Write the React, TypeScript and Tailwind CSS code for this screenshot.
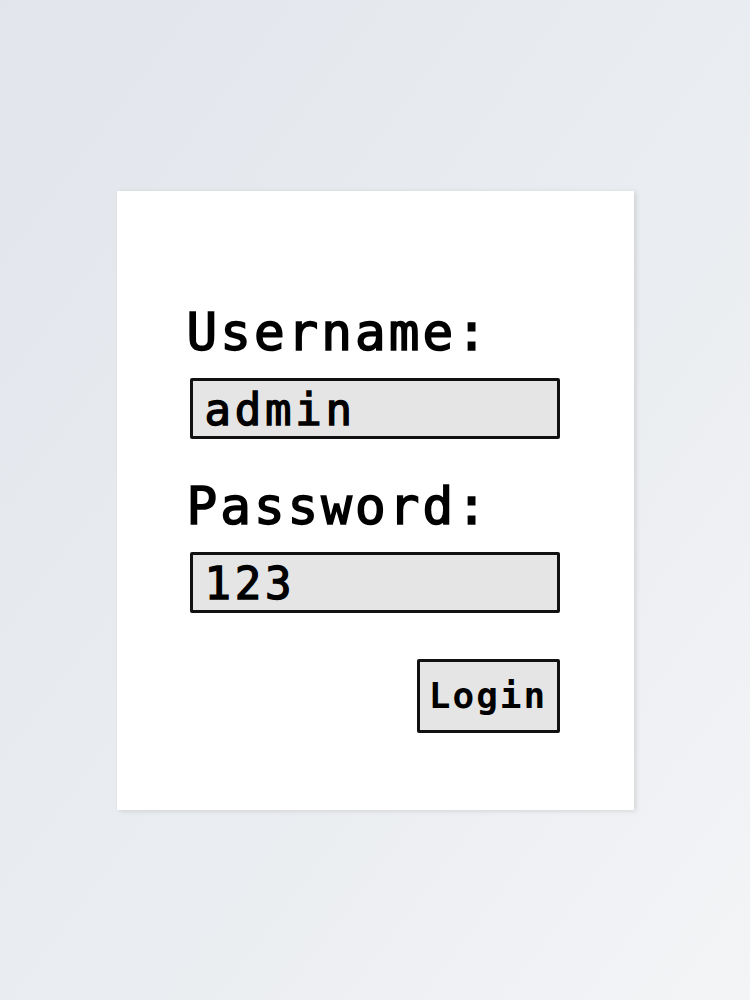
import React from 'react';

const mono = "font-['DejaVu_Sans_Mono','Liberation_Mono',monospace]";

const Field: React.FC<{ value: string }> = ({ value }) => (
  <div className="ml-[3px] h-[61px] w-[370px] rounded-[2px] border-[3px] border-[#111] bg-[#e5e5e5] pl-[12px] pt-[7px]">
    <span className="block text-[44px] leading-[44px] tracking-[3.75px] text-black [-webkit-text-stroke:1.4px_#000]">
      {value}
    </span>
  </div>
);

export default function App() {
  return (
    <div className={`flex h-[1000px] w-full items-center justify-center bg-linear-to-br from-[#e2e6ec] via-[#e9ecf0] to-[#f3f4f6] ${mono}`}>
      <div className="flex h-[619px] w-[517px] flex-col bg-white pl-[70px] pt-[116px] shadow-[2px_1px_5px_rgba(0,0,0,0.12)]">
        <h2 className="text-[51px] leading-[51px] tracking-[3px] text-black [-webkit-text-stroke:1.6px_#000]">Username:</h2>
        <div className="mt-[20px]">
          <Field value="admin" />
        </div>

        <h2 className="mt-[42px] text-[51px] leading-[51px] tracking-[3px] text-black [-webkit-text-stroke:1.6px_#000]">Password:</h2>
        <div className="mt-[20px]">
          <Field value="123" />
        </div>

        <div className="mt-[46px] flex w-[373px] justify-end">
          <button className="flex h-[74px] w-[143px] items-center justify-center rounded-[2px] border-[3px] border-[#111] bg-[#e5e5e5] text-[36px] font-bold leading-[36px] tracking-[2px] text-black">
            Login
          </button>
        </div>
      </div>
    </div>
  );
}
